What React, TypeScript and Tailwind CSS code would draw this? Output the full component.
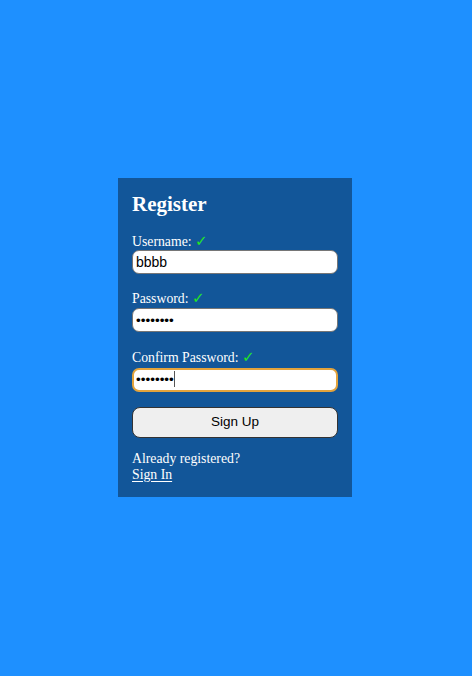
import React from "react";

const serif = { fontFamily: '"Liberation Serif", "Times New Roman", serif' };
const sans = { fontFamily: '"Liberation Sans", Arial, sans-serif' };

function Check() {
  return (
    <>
      {" "}
      <span
        className="inline-block align-baseline text-[15px] leading-[10px] text-[#22e622]"
        style={{ fontFamily: '"DejaVu Sans", sans-serif' }}
      >
        ✓
      </span>
    </>
  );
}

export default function App() {
  return (
    <div className="min-h-[676px] w-full bg-[#1e90ff] pt-[178px] pl-[118px]" style={serif}>
      <section className="flex w-[234px] flex-col bg-black/40 px-[14px] pt-[14px] pb-[14px] text-white">
        <h1 className="text-[21px] leading-[24px] font-bold">Register</h1>
        <form className="flex flex-col" onSubmit={(e) => e.preventDefault()}>
          <label className="mt-[18px] h-[16px] text-[13.75px] leading-[16px]">
            Username:<Check />
          </label>
          <input
            readOnly
            value="bbbb"
            className="h-[24px] w-full rounded-[7px] border border-[#767676] bg-white px-[3px] text-[14px] text-black outline-none"
            style={sans}
          />
          <label className="mt-[17px] h-[16px] text-[13.75px] leading-[16px]">
            Password:<Check />
          </label>
          <input
            readOnly
            type="password"
            value="bbbbbbbb"
            className="mt-[1px] h-[24px] w-full rounded-[7px] border border-[#767676] bg-white px-[3px] text-[13.5px] text-black outline-none"
            style={sans}
          />
          <label className="mt-[18px] h-[16px] text-[13.75px] leading-[16px]">
            Confirm Password:<Check />
          </label>
          <div className="relative mt-[1px]">
            <input
              readOnly
              type="password"
              value="bbbbbbbb"
              className="h-[24px] w-full rounded-[7px] border-2 border-[#e3a33c] bg-white px-[2px] text-[13.5px] text-black outline-none"
              style={sans}
            />
            <span className="absolute left-[42px] top-[4px] h-[16px] w-px bg-[#555]" />
          </div>
          <button
            type="submit"
            className="mt-[15px] h-[31px] w-full rounded-[8px] border border-[#333] bg-[#efefef] text-[13.5px] text-black"
            style={sans}
          >
            Sign Up
          </button>
        </form>
        <p className="mt-[13px] text-[13.75px] leading-[16px]">
          Already registered?
          <br />
          <a href="#" className="underline underline-offset-2">
            Sign In
          </a>
        </p>
      </section>
    </div>
  );
}
